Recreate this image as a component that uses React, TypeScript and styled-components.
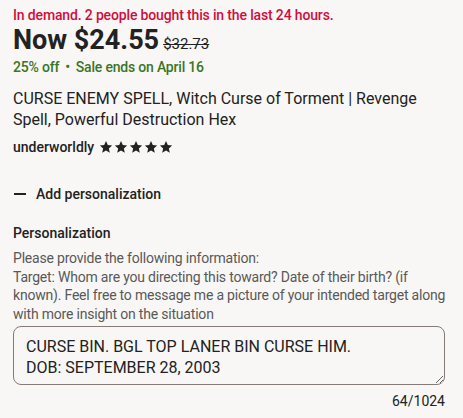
import React from "react";
import styled, { createGlobalStyle } from "styled-components";

const Global = createGlobalStyle`
  html, body { margin: 0; padding: 0; background: #f8f7f5; }
  body { font-family: Roboto, "Noto Sans", Arial, sans-serif; color: #222; }
  * { box-sizing: border-box; }
`;

const Page = styled.div`
  width: 463px;
  height: 418px;
  padding: 6px 15px 0 13px;
  background: #f8f7f5;
  display: flex;
  flex-direction: column;
  overflow: hidden;
`;

const Demand = styled.div`
  color: #d10c3e;
  font-size: 14px;
  font-weight: 500;
  line-height: 18px;
  letter-spacing: -0.15px;
`;

const PriceRow = styled.div`
  display: flex;
  align-items: baseline;
  gap: 4px;
  margin-top: 0px;
`;

const Price = styled.div`
  font-size: 27px;
  font-weight: 700;
  line-height: 32px;
  color: #222;
`;

const OldPrice = styled.div`
  font-size: 15px;
  text-decoration: line-through;
  color: #222;
`;

const SaleRow = styled.div`
  color: #3b7526;
  font-size: 14px;
  font-weight: 500;
  line-height: 18px;
  margin-top: 2px;
  display: flex;
  gap: 6px;
  letter-spacing: -0.2px;
`;

const Title = styled.div`
  font-size: 16px;
  line-height: 21px;
  margin-top: 12px;
  color: #222;
`;

const ShopRow = styled.div`
  display: flex;
  align-items: center;
  gap: 5px;
  margin-top: 8px;
`;

const ShopName = styled.div`
  font-size: 14px;
  font-weight: 500;
  line-height: 18px;
`;

const Stars = styled.div`
  display: flex;
  gap: 1px;
`;

const Toggle = styled.div`
  display: flex;
  align-items: center;
  gap: 10px;
  margin-top: 29px;
  font-size: 14px;
  font-weight: 500;
  line-height: 18px;
`;

const Dash = styled.span`
  display: block;
  width: 12px;
  height: 1.5px;
  background: #222;
  margin-left: 1px;
`;

const Label = styled.div`
  margin-top: 21px;
  font-size: 14px;
  font-weight: 500;
  line-height: 18px;
`;

const Help = styled.div`
  margin-top: 7px;
  font-size: 14px;
  line-height: 18.5px;
  color: #595959;
  letter-spacing: -0.2px;
`;

const Area = styled.textarea`
  margin-top: 3px;
  width: 432px;
  height: 59px;
  border: 1px solid #857b77;
  border-radius: 8px;
  background: transparent;
  padding: 9px 12px 7px;
  font-family: inherit;
  font-size: 16px;
  line-height: 21px;
  color: #222;
  resize: vertical;
  outline: none;
`;

const Counter = styled.div`
  width: 432px;
  text-align: right;
  margin-top: 7px;
  font-size: 14px;
  line-height: 18px;
  color: #222;
`;

const Star = () => (
  <svg width="14" height="14" viewBox="0 0 24 24">
    <path
      fill="#222"
      d="M12 1.8l3.1 6.9 7.4.8-5.6 5 1.6 7.4L12 18.1l-6.5 3.8 1.6-7.4-5.6-5 7.4-.8z"
    />
  </svg>
);

export default function App() {
  return (
    <Page>
      <Global />
      <Demand>In demand. 2 people bought this in the last 24 hours.</Demand>
      <PriceRow>
        <Price>Now $24.55</Price>
        <OldPrice>$32.73</OldPrice>
      </PriceRow>
      <SaleRow>
        <span>25% off</span>
        <span>•</span>
        <span>Sale ends on April 16</span>
      </SaleRow>
      <Title>
        CURSE ENEMY SPELL, Witch Curse of Torment | Revenge Spell, Powerful
        Destruction Hex
      </Title>
      <ShopRow>
        <ShopName>underworldly</ShopName>
        <Stars>
          {[0, 1, 2, 3, 4].map((i) => (
            <Star key={i} />
          ))}
        </Stars>
      </ShopRow>
      <Toggle>
        <Dash />
        Add personalization
      </Toggle>
      <Label>Personalization</Label>
      <Help>
        Please provide the following information:
        <br />
        Target: Whom are you directing this toward? Date of their birth? (if
        known). Feel free to message me a picture of your intended target along
        with more insight on the situation
      </Help>
      <Area
        defaultValue={"CURSE BIN. BGL TOP LANER BIN CURSE HIM.\nDOB: SEPTEMBER 28, 2003"}
      />
      <Counter>64/1024</Counter>
    </Page>
  );
}
